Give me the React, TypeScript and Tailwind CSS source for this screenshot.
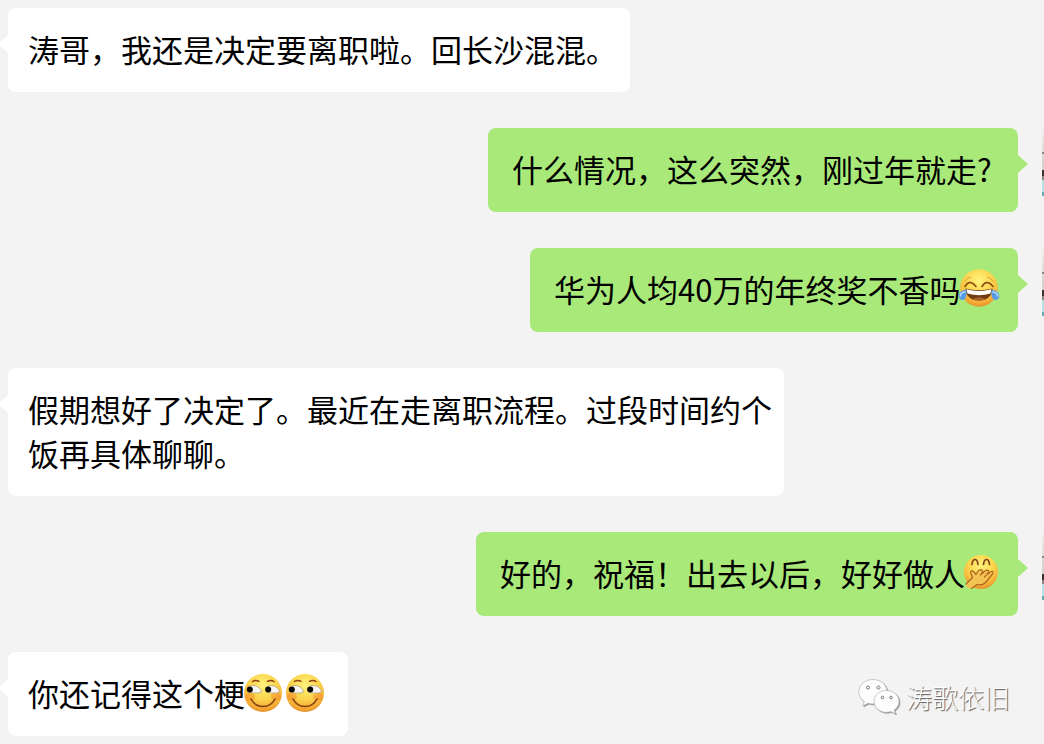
import type { ReactNode } from 'react';
import { clsx } from 'clsx';

interface Message {
  id: number;
  side: 'left' | 'right';
  width: string;
  content: ReactNode;
}

function FaceGradient({ id }: { id: string }) {
  return (
    <defs>
      <radialGradient id={id} cx="0.5" cy="0.3" r="0.75">
        <stop offset="0" stopColor="#fff27c" />
        <stop offset="0.5" stopColor="#fbd44b" />
        <stop offset="0.8" stopColor="#f4ab35" />
        <stop offset="1" stopColor="#dd8426" />
      </radialGradient>
    </defs>
  );
}

function JoyEmoji() {
  return (
    <svg viewBox="2 2 42 42" role="img" aria-label="笑哭" className="inline-block size-[42px] overflow-visible align-middle">
      <FaceGradient id="joy-face" />
      <circle cx="21" cy="21" r="18.8" fill="url(#joy-face)" />
      <g fill="none" stroke="#8a4a12" strokeLinecap="round">
        <path d="M7 14.5q1.500-3.500 5.500-4.500M29.500 10q4 1 5.500 4.500" strokeWidth="1" opacity="0.4" />
        <path d="M7 19.500q2.500-4.500 5.500-4t5.500 4M24 19.500q2.500-4.500 5.500-4t5.500 4" strokeWidth="1.600" />
      </g>
      <path d="M7.500 21.500Q21 25 34.500 21.500C34.500 29 29 33.500 21 33.500S7.500 29 7.500 21.500z" fill="#713b12" />
      <path d="M8.500 22.300Q21 25.600 33.500 22.300L32.500 26.500Q21 30 9.500 26.500z" fill="#fffdf5" />
      <path d="M14 32Q21 28.500 28 32Q21 35 14 32z" fill="#a8642a" />
      <path d="M8.500 23C3.500 23 .7 25.500.7 29c0 2.500 1.600 4 3.800 4C8 33 9 28.500 8.500 23zM33.500 23c5 0 7.800 2.500 7.800 6 0 2.500-1.600 4-3.800 4-3.500 0-4.500-4.500-4-10z" fill="#5b9be6" />
      <path d="M7 25c-3 .3-4.700 1.800-4.700 4M35 25c3 .3 4.700 1.800 4.700 4" fill="none" stroke="#b4dcff" strokeWidth="1.500" strokeLinecap="round" />
    </svg>
  );
}

function GiggleEmoji() {
  return (
    <svg viewBox="7 0 42 42" role="img" aria-label="偷笑" className="inline-block size-[42px] overflow-visible align-middle">
      <FaceGradient id="giggle-face" />
      <circle cx="23" cy="19" r="17" fill="url(#giggle-face)" />
      <path d="M14 11.500q.5-5 3-5t3 5M25.500 11.500q.5-5 3-5t3 5" fill="none" stroke="#84431a" strokeWidth="1.700" strokeLinecap="round" />
      <path
        d="M8 31L14.500 24.500L12.500 19Q13 16 15.500 18.500L18 21.500Q21 15.500 24 17Q26 18 24.500 20.500Q28 16 30.500 17.500Q31.500 18.500 30 21L33 18.500Q36 17.500 34.500 21L27.500 29.500Q24 33 19 31.500L13.500 35.500Q7.500 35.500 8 31z"
        fill="#f3c353"
      />
      <path
        d="M8 31L14.500 24.500L12.500 19.500Q13 16.500 15.500 18.500L18 21.500Q21 15.500 24 17Q26 18 22.500 22M24.500 20.500Q28 16 30.500 17.500Q31.500 18.500 26.500 24M30 21L33 18.500Q36 17.500 34.500 21L27.500 29.500Q24 33 19 31.500L13.500 35.500"
        fill="none"
        stroke="#ad641b"
        strokeWidth="1.200"
        strokeLinecap="round"
        strokeLinejoin="round"
      />
    </svg>
  );
}

function SmirkEmoji({ id }: { id: string }) {
  return (
    <svg viewBox="3 0 42 42" role="img" aria-label="斜眼笑" className="inline-block size-[42px] overflow-visible align-middle">
      <FaceGradient id={id} />
      <circle cx="21" cy="20" r="19" fill={`url(#${id})`} />
      <ellipse cx="8" cy="23.500" rx="5" ry="4" fill="#f57e25" opacity="0.4" />
      <ellipse cx="34" cy="23.500" rx="5" ry="4" fill="#f57e25" opacity="0.4" />
      <path d="M10.500 8.500Q13.500 6.500 17 8.300M25.500 8.300Q29 6.500 32 8.500" fill="none" stroke="#8b3d13" strokeWidth="1.500" strokeLinecap="round" />
      <path d="M5 16Q6 12.500 12 12.500Q18.500 13.500 19.500 19Q17 20.500 12 20Q5 20 5 16zM23.500 16Q24.500 12.500 30 12.500Q36.500 13.500 37.500 19Q35 20.500 30 20Q23.500 20 23.500 16z" fill="#f5f5f3" stroke="#a48a70" strokeWidth="0.600" />
      <circle cx="7.800" cy="16.500" r="3" fill="#080808" />
      <circle cx="26.200" cy="16.500" r="3" fill="#080808" />
      <path d="M9 26Q13 33.500 21 33.500T33 26" fill="none" stroke="#803710" strokeWidth="1.500" strokeLinecap="round" />
    </svg>
  );
}

function WeChatLogo() {
  return (
    <svg viewBox="0 0 42 38" aria-hidden="true" className="h-[38px] w-[42px] drop-shadow-[1px_1px_0px_#999]">
      <g fill="#fdfdfd" stroke="#aaa" strokeWidth="0.600" strokeLinejoin="round">
        <path d="M15 1.500C7 1.500.800 7 .800 13.800c0 4 2.200 7.400 5.500 9.600l-1.500 4.600 5.200-2.800c1.600.500 3.300.700 5 .700 8 0 14-5.300 14-12.100S23 1.500 15 1.500z" />
        <path d="M28.500 12.500c-6.900 0-12.500 4.700-12.500 10.900s5.600 10.900 12.500 10.900c1.600 0 3.100-.3 4.500-.700l4.500 2.400-1.300-4c3-2 4.800-5 4.800-8.600 0-6.200-5.600-10.900-12.500-10.900z" />
        <g stroke="#777" strokeWidth="1">
          <circle cx="10" cy="9.500" r="1.500" />
          <circle cx="20.500" cy="9.500" r="1.500" />
          <circle cx="24.500" cy="19.500" r="1.300" />
          <circle cx="33" cy="19.500" r="1.300" />
        </g>
      </g>
    </svg>
  );
}

const messages: Message[] = [
  { id: 1, side: 'left', width: 'w-[622px]', content: '涛哥，我还是决定要离职啦。回长沙混混。' },
  { id: 2, side: 'right', width: 'w-[530px]', content: '什么情况，这么突然，刚过年就走?' },
  { id: 3, side: 'right', width: 'w-[488px]', content: <>华为人均40万的年终奖不香吗<JoyEmoji /></> },
  { id: 4, side: 'left', width: 'w-[776px]', content: '假期想好了决定了。最近在走离职流程。过段时间约个饭再具体聊聊。' },
  { id: 5, side: 'right', width: 'w-[542px]', content: <>好的，祝福！出去以后，好好做人<GiggleEmoji /></> },
  {
    id: 6,
    side: 'left',
    width: 'w-[340px]',
    content: <>你还记得这个梗<SmirkEmoji id="smirk-a" /><SmirkEmoji id="smirk-b" /></>,
  },
];

function Avatar() {
  return (
    <div className="ml-6 h-[68px] w-0.5 shrink-0 bg-linear-to-b from-[#f0f0f0] via-[#d8d2ce] to-[#9fd0d2]">
      <div className="h-6" />
      <div className="h-0.5 bg-[#8f8884]" />
      <div className="h-4" />
      <div className="h-1.5 bg-[#40302c]" />
      <div className="h-1 bg-[#8c8583]" />
      <div className="h-3 bg-[#b5e2e4]" />
      <div className="h-1 bg-[#6aa9ae]" />
    </div>
  );
}

function Bubble({ side, width, content }: Omit<Message, 'id'>) {
  const isRight = side === 'right';

  return (
    <li className={clsx('flex items-start', isRight ? 'justify-end' : 'justify-start pl-2')}>
      <div
        className={clsx(
          'relative max-w-full rounded-lg pt-[19px] pb-[21px] text-[31px] leading-[44px]',
          width,
          isRight ? 'bg-[#a9e97a] pl-6' : 'bg-white pl-5 pr-2'
        )}
      >
        <p className="[&>svg]:-mt-2">{content}</p>
        {/* Bubble tail */}
        <svg
          viewBox="0 0 10 18"
          aria-hidden="true"
          className={clsx(
            'absolute top-[27px] h-[18px] w-2.5',
            isRight ? 'left-full fill-[#a9e97a]' : 'right-full fill-white'
          )}
        >
          <path d={isRight ? 'M0 0L10 9L0 18z' : 'M10 0L0 9L10 18z'} />
        </svg>
      </div>
      {isRight && <Avatar />}
    </li>
  );
}

export default function App() {
  return (
    <main className="relative min-h-screen overflow-hidden bg-[#f3f3f3] py-2 font-['Noto_Sans_CJK_SC',sans-serif] text-black">
      <ul className="flex flex-col gap-9">
        {messages.map(({ id, ...message }) => (
          <Bubble key={id} {...message} />
        ))}
      </ul>

      {/* Watermark */}
      <div className="absolute right-[34px] bottom-7 flex items-center gap-1.5">
        <WeChatLogo />
        <span className="text-[26px] leading-9 font-light text-white [text-shadow:1px_1px_1px_#555]">涛歌依旧</span>
      </div>
    </main>
  );
}
